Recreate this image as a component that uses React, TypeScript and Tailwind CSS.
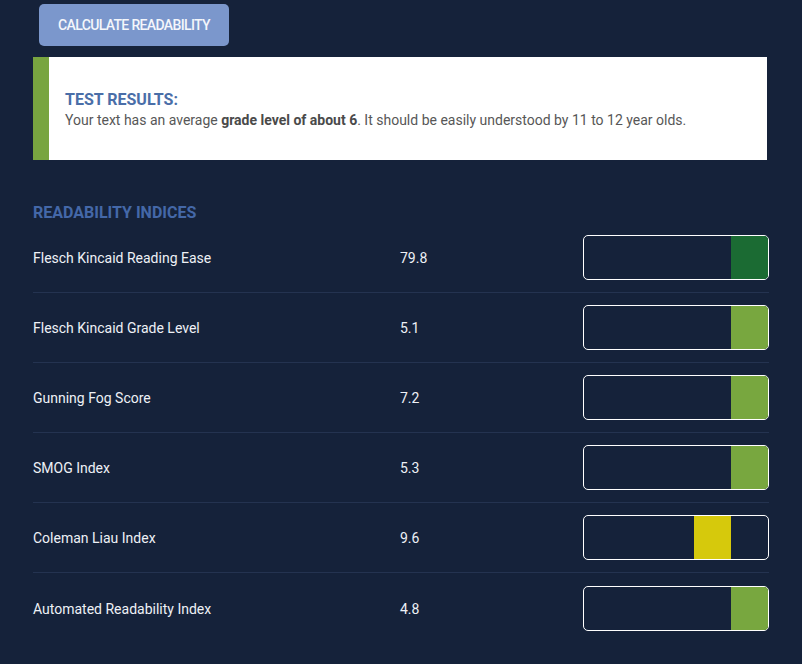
const indices = [
  { name: 'Flesch Kincaid Reading Ease', value: '79.8', slot: 4, color: 'bg-[#1b6b33]' },
  { name: 'Flesch Kincaid Grade Level', value: '5.1', slot: 4, color: 'bg-[#78a73f]' },
  { name: 'Gunning Fog Score', value: '7.2', slot: 4, color: 'bg-[#78a73f]' },
  { name: 'SMOG Index', value: '5.3', slot: 4, color: 'bg-[#78a73f]' },
  { name: 'Coleman Liau Index', value: '9.6', slot: 3, color: 'bg-[#d6c90c]' },
  { name: 'Automated Readability Index', value: '4.8', slot: 4, color: 'bg-[#78a73f]' },
];

function ScoreBar({ slot, color }: { slot: number; color: string }) {
  return (
    <div className="w-[186px] h-[45px] rounded-[5px] border-[1.5px] border-white overflow-hidden grid grid-cols-5">
      {[0, 1, 2, 3, 4].map(i => (
        <div key={i} className={i === slot ? color : ''} />
      ))}
    </div>
  );
}

export default function App() {
  return (
    <div
      className="min-h-[664px] w-full bg-[#15223a] px-[33px] pt-[4px] pb-8"
      style={{ fontFamily: 'Roboto, "Noto Sans", sans-serif' }}
    >
      <div className="pl-[6px]">
        <button className="h-[42px] w-[190px] rounded-[5px] bg-[#7b97cc] text-[#f4f6fb] text-[14px] font-medium uppercase tracking-[-0.65px]">
          Calculate Readability
        </button>
      </div>

      <div className="mt-[11px] w-[734px] h-[103px] bg-white border-l-[16px] border-[#78a540] flex flex-col justify-center pl-[16px] pt-[3px]">
        <h2 className="text-[#4a6ea8] text-[16px] font-bold uppercase leading-[20px]">Test Results:</h2>
        <p className="text-[#575757] text-[14px] leading-[20px]">
          Your text has an average <b className="font-bold text-[#4a4a4a]">grade level of about 6</b>. It should be easily understood by 11 to 12 year olds.
        </p>
      </div>

      <h2 className="mt-[42px] text-[#4468a8] text-[16px] font-bold uppercase leading-[22px]">
        Readability Indices
      </h2>

      <div className="-mt-[1px] w-[736px]">
        {indices.map((row, i) => (
          <div
            key={row.name}
            className={`h-[70px] flex items-center ${i < indices.length - 1 ? 'border-b border-[#243350]' : ''}`}
          >
            <div className="w-[367px] text-[#eef1f6] text-[14px] pt-[2px]">{row.name}</div>
            <div className="flex-1 text-[#eef1f6] text-[14px] pt-[2px]">{row.value}</div>
            <ScoreBar slot={row.slot} color={row.color} />
          </div>
        ))}
      </div>
    </div>
  );
}
